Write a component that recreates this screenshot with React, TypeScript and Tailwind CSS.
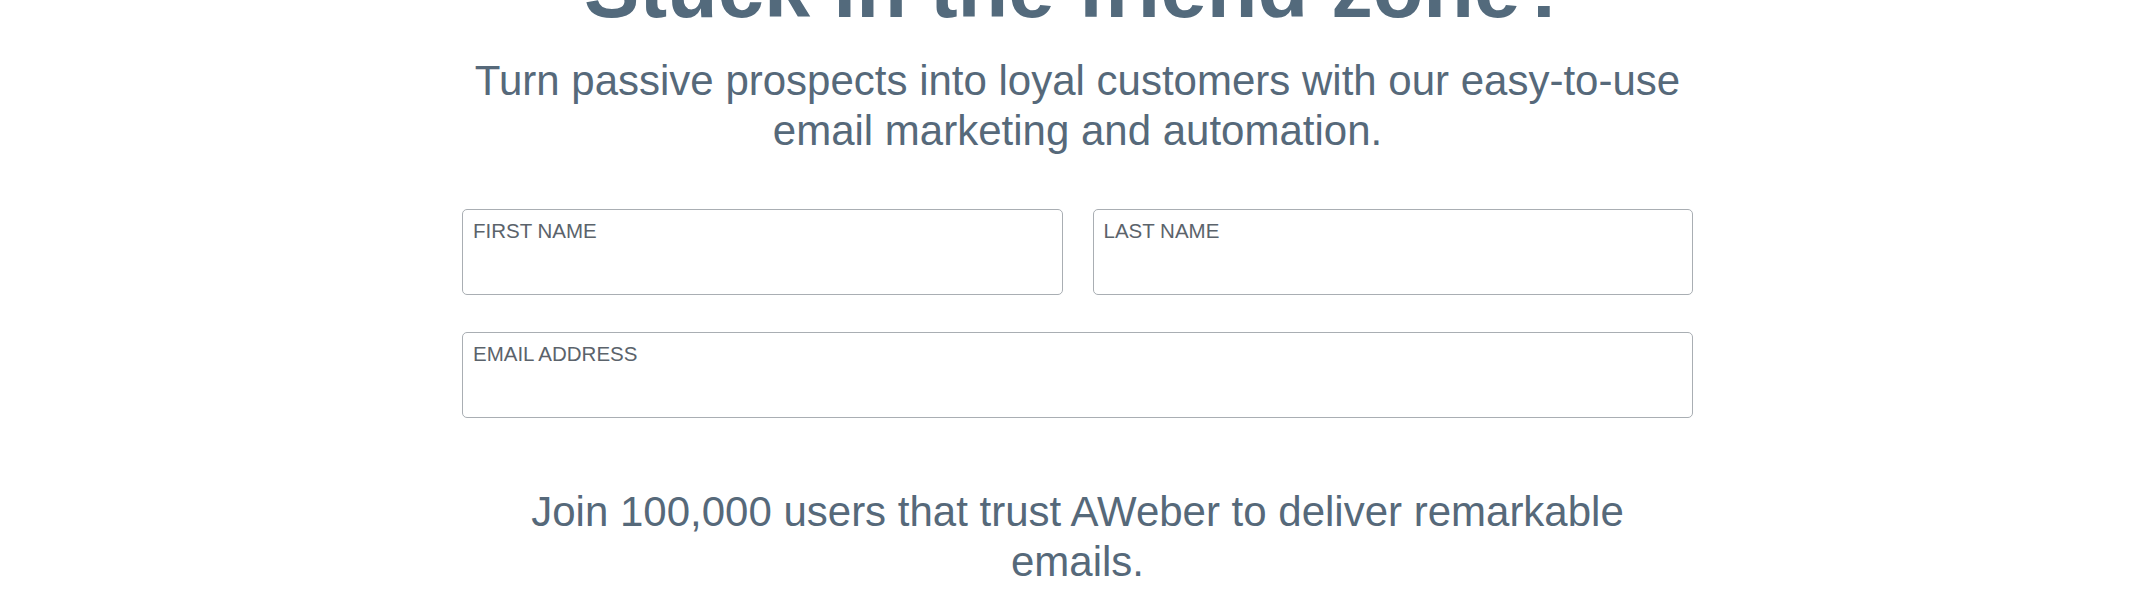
import React from 'react';

const fields = [
    { id: 'first', label: 'FIRST NAME' },
    { id: 'last', label: 'LAST NAME' },
];

const Field = ({ label, id }: { label: string; id: string }) => (
    <label
        htmlFor={id}
        className="flex h-[86px] flex-1 flex-col rounded-[5px] border border-[#a9aeb3] bg-white px-[10px] pt-[9px] text-left"
    >
        <span className="text-[20.5px] leading-[24px] text-[#5b636b]">{label}</span>
        <input id={id} className="mt-1 w-full bg-transparent text-[20px] text-[#3b4650] outline-none" />
    </label>
);

export default function App() {
    return (
        <div
            className="min-h-[600px] w-full overflow-hidden bg-white pl-[15px]"
            style={{ fontFamily: '"Liberation Sans", Arial, sans-serif' }}
        >
            <div className="mx-auto flex w-[1231px] flex-col items-center text-center">
                <h1 className="-mt-[55px] whitespace-nowrap text-[83px] font-bold leading-[88px] text-[#536a7c]">
                    Stuck in the friend zone?
                </h1>

                <p className="mt-[23px] max-w-[1240px] text-[42px] leading-[50px] text-[#56697a]">
                    Turn passive prospects into loyal customers with our easy-to-use email marketing and automation.
                </p>

                <form className="mt-[53px] flex w-full flex-col gap-[37px]" onSubmit={(e) => e.preventDefault()}>
                    <div className="flex gap-[30px]">
                        {fields.map((f) => (
                            <Field key={f.id} id={f.id} label={f.label} />
                        ))}
                    </div>
                    <div className="flex">
                        <Field id="email" label="EMAIL ADDRESS" />
                    </div>
                </form>

                <p className="mt-[69px] max-w-[1150px] text-[42px] leading-[50px] text-[#56697a]">
                    Join 100,000 users that trust AWeber to deliver remarkable emails.
                </p>
            </div>
        </div>
    );
}
